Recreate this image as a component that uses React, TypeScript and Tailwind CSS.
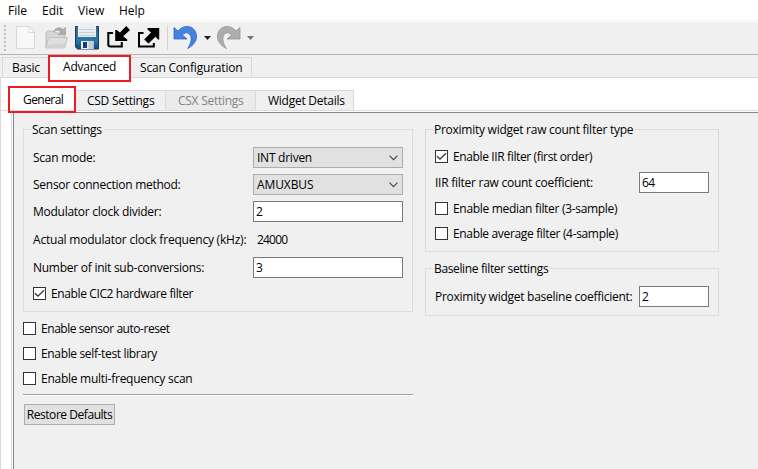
import type { ReactNode } from 'react';

function Check({ label, checked = false, className = '' }: { label: string; checked?: boolean; className?: string }) {
  return (
    <div className={`flex h-[13px] items-center ${className}`}>
      <span className="mr-[5px] block size-[13px] shrink-0 border border-[#333] bg-white">
        {checked && (
          <svg viewBox="0 0 11 11" className="block size-[11px]" fill="none" stroke="#333" strokeWidth="1.3">
            <path d="M1 5.2 L4 8.2 L10 2.2" />
          </svg>
        )}
      </span>
      <span>{label}</span>
    </div>
  );
}

function Combo({ value, className = '' }: { value: string; className?: string }) {
  return (
    <div className="flex h-[21px] w-[150px] shrink-0 items-center justify-between border border-[#adadad] bg-[#e1e1e1] pr-1 pl-[3px]">
      <span className={className}>{value}</span>
      <svg width="9" height="6" viewBox="0 0 9 6" fill="none" stroke="#444" strokeWidth="1.1">
        <path d="M0.5 0.7 L4.5 4.7 L8.5 0.7" />
      </svg>
    </div>
  );
}

function Field({ value, width = 'w-[150px]' }: { value: string; width?: string }) {
  return (
    <div className={`flex h-[21px] shrink-0 items-center border border-[#7a7a7a] bg-white pl-[2px] tracking-[-0.7px] ${width}`}>{value}</div>
  );
}

function Row({ label, children, className = '' }: { label: string; children: ReactNode; className?: string }) {
  return (
    <div className={`flex h-[21px] items-center justify-between ${className}`}>
      <span>{label}</span>
      {children}
    </div>
  );
}

function Group({ title, children, className = '' }: { title: string; children: ReactNode; className?: string }) {
  return (
    <section className={`border border-[#dcdcdc] pr-[9px] pl-[9px] ${className}`}>
      <h2 className="-mt-2 -ml-[2px] h-4 w-fit bg-[#f0f0f0] pr-[2px] pl-px leading-4">{title}</h2>
      {children}
    </section>
  );
}

function DropArrow({ className }: { className: string }) {
  return (
    <svg width="7" height="4" viewBox="0 0 7 4" className={className}>
      <path d="M0 0H7L3.5 4Z" fill="currentColor" />
    </svg>
  );
}

function Toolbar() {
  return (
    <div className="flex h-[33px] items-start border-b border-[#b4b4b4] bg-[#f0f0f0] pt-[3px]">
      <svg width="4" height="27" viewBox="0 0 4 27" className="ml-[4px] shrink-0" fill="#c0c0c0">
        {[0, 4, 8, 12, 16, 20, 24].map((y) => (
          <rect key={y} x="0" y={y} width="2" height="2" />
        ))}
      </svg>
      <svg width="20" height="25" viewBox="0 0 20 25" className="ml-[8px] shrink-0">
        <path d="M0.5 1.5H13L18.5 7.5V23.5H0.5Z" fill="#f8f8f8" stroke="#d9d9d9" />
        <path d="M13 1.5V7.5H18.5Z" fill="#fff" stroke="#d9d9d9" />
      </svg>
      <svg width="24" height="25" viewBox="0 0 24 25" className="ml-[9px] shrink-0">
        <path d="M1 23V8L2.5 6H8L10 8H20V12" fill="#d6d6d6" stroke="#bcbcbc" />
        <path d="M3.5 12.5H22.5L19.5 23H1Z" fill="#dedede" stroke="#c2c2c2" />
        <path d="M1.5 20 L20 18 L19 22.5H1.5Z" fill="#d3d3d3" />
        <path d="M8.5 7C10 2.5 15 1.5 18 4.5L20.5 2.5V9.5H13.5L16 7C14 4.8 11 5 8.5 7Z" fill="#adadad" stroke="#999" strokeWidth=".6" />
      </svg>
      <svg width="25" height="25" viewBox="0 0 25 25" className="ml-[6px] shrink-0">
        <defs>
          <linearGradient id="disk" x2="0" y2="1">
            <stop stopColor="#356b93" />
            <stop offset=".65" stopColor="#2676a7" />
            <stop offset="1" stopColor="#174870" />
          </linearGradient>
        </defs>
        <path d="M.5 1.5H23.5V24H2.5L.5 22Z" fill="url(#disk)" stroke="#173d61" />
        <rect x="3" y="1" width="18" height="11" fill="#e9eef1" />
        <path d="M4 4.5H20M4 7.5H20M4 10.5H20" stroke="#c7d0d6" />
        <rect x="6" y="16" width="12.5" height="8" fill="#e8edf0" />
        <rect x="13.5" y="16" width="5" height="8" fill="#c4ced7" />
        <rect x="8" y="17" width="4" height="6" fill="#173f75" />
      </svg>
      <svg width="24" height="25" viewBox="0 0 24 25" className="ml-[7px] shrink-0">
        <path d="M6 8H1.3V19.5Q1.3 21.5 3.5 21.5H14.8V17" fill="none" stroke="#000" strokeWidth="2" />
        <path d="M19.2 1L23 5L16.2 11.2L20.2 14.5V16H8.2V5H9.6L13 7.5Z" fill="#000" />
      </svg>
      <svg width="24" height="25" viewBox="0 0 24 25" className="ml-[7px] shrink-0">
        <path d="M5.5 8H1V21.5H15.8V18" fill="none" stroke="#000" strokeWidth="2" />
        <path d="M9.5 3H21.2V14.5H20L17.5 11.8L10.5 18.5L6.2 14.5L13 7.5L9.5 4.5Z" fill="#000" />
      </svg>
      <div className="ml-[5px] h-[25px] w-px shrink-0 bg-[#d2d2d2]" />
      <svg width="26" height="25" viewBox="0 0 26 25" className="ml-[5px] shrink-0">
        <path d="M1 2.5L5 6C9.5 .5 17 -.2 21 4.5C26 10.5 23.5 19.5 14.5 23.5C18.5 18.5 20 10 14.8 8C12.5 7.3 11 8.5 9.5 10L14 14H1Z" fill="#4581e0" stroke="#2f68c8" strokeWidth=".8" />
      </svg>
      <DropArrow className="mt-[11px] ml-[5px] shrink-0 text-[#202020]" />
      <svg width="26" height="25" viewBox="0 0 26 25" className="ml-[5px] shrink-0">
        <path transform="matrix(-1 0 0 1 25 0)" d="M1 2.5L5 6C9.5 .5 17 -.2 21 4.5C26 10.5 23.5 19.5 14.5 23.5C18.5 18.5 20 10 14.8 8C12.5 7.3 11 8.5 9.5 10L14 14H1Z" fill="#adadad" stroke="#969696" strokeWidth=".8" />
      </svg>
      <DropArrow className="mt-[11px] ml-[5px] shrink-0 text-[#777]" />
    </div>
  );
}

export default function App() {
  return (
    <div className="flex h-[469px] w-[758px] flex-col overflow-hidden bg-[#f0f0f0] font-['Open_Sans','Noto_Sans',sans-serif] text-[12px] leading-4 tracking-[-0.26px] whitespace-nowrap text-black">
      <nav className="flex h-[21px] shrink-0 border-b border-[#f0f0f0] bg-white pt-[3px] pl-2 tracking-normal">
        <span className="w-[34px]">File</span>
        <span className="w-[36px]">Edit</span>
        <span className="w-[41px]">View</span>
        <span>Help</span>
      </nav>
      <div className="h-px shrink-0 bg-white" />
      <Toolbar />

      <div className="flex h-[23px] shrink-0 items-start border-b border-[#d9d9d9] pt-[2px] pl-[2px] tracking-[-0.2px]">
        <div className="h-[20px] w-[48px] border-t border-l border-[#d9d9d9] pt-[2px] pl-[9px]">Basic</div>
        <div className="relative h-[22px] w-[79px] bg-white pt-[2px] pl-[13px]">
          Advanced
          <span className="pointer-events-none absolute -inset-x-[2px] -top-[2px] -bottom-[3px] z-10 border-2 border-[#ed1c24]" />
        </div>
        <div className="h-[20px] w-[123px] border-t border-r border-[#d9d9d9] pt-[2px] pl-[11px]">Scan Configuration</div>
      </div>

      <div className="flex min-h-0 flex-1 flex-col border-l border-[#d9d9d9] bg-white pt-[10px]">
        <div className="flex h-[23px] shrink-0 items-start border-b border-[#dcdcdc] pl-[9px]">
          <div className="relative z-10 h-[22px] w-[64px] bg-white pt-[4px] pl-[13px] tracking-[-0.55px]">
            General
            <span className="pointer-events-none absolute -inset-x-[2px] -top-[2px] -bottom-[3px] border-2 border-[#ed1c24]" />
          </div>
          <div className="mt-[2px] flex h-[20px] bg-[#f0f0f0]">
            <div className="w-[91px] border-t border-[#d9d9d9] pt-[2px] pl-[13px]">CSD Settings</div>
            <div className="w-[90px] border-t border-l border-[#d9d9d9] bg-[#ebebeb] pt-[2px] pl-[12px] text-[#838383]">CSX Settings</div>
            <div className="w-[99px] border-x border-t border-[#d9d9d9] pt-[2px] pl-[12px]">Widget Details</div>
          </div>
        </div>
        <div className="ml-[10px] flex min-h-0 flex-1 border-l border-[#dcdcdc] pt-px pl-px">
          <main className="flex flex-1 items-start gap-3 border-t border-l border-[#828790] bg-[#f0f0f0] pt-[16px] pl-[9px]">
            <div className="flex w-[390px] flex-col">
              <Group title="Scan settings" className="h-[183px]">
                <Row label="Scan mode:" className="mt-[9px]"><Combo value="INT driven" className="tracking-[-0.25px]" /></Row>
                <Row label="Sensor connection method:" className="mt-[6px]"><Combo value="AMUXBUS" className="tracking-[-0.1px]" /></Row>
                <Row label="Modulator clock divider:" className="mt-[6px]"><Field value="2" /></Row>
                <Row label="Actual modulator clock frequency (kHz):" className="mt-[7px] tracking-[-0.21px]">
                  <span className="w-[146px] tracking-[-0.8px]">24000</span>
                </Row>
                <Row label="Number of init sub-conversions:" className="mt-[7px]"><Field value="3" /></Row>
                <Check label="Enable CIC2 hardware filter" checked className="mt-[9px] tracking-[-0.38px]" />
              </Group>
              <Check label="Enable sensor auto-reset" className="mt-[10px] tracking-[-0.45px]" />
              <Check label="Enable self-test library" className="mt-[12px] tracking-[-0.35px]" />
              <Check label="Enable multi-frequency scan" className="mt-[12px]" />
              <div className="mt-[9px] h-[2px] border-t border-[#a0a0a0] bg-white" />
              <button className="mt-[8px] ml-px flex h-[21px] w-[91px] items-center justify-center border border-[#adadad] bg-[#e1e1e1] tracking-[-0.45px]">Restore Defaults</button>
            </div>
            <div className="flex w-[294px] flex-col">
              <Group title="Proximity widget raw count filter type" className="h-[123px]">
                <Check label="Enable IIR filter (first order)" checked className="mt-[12px] tracking-[-0.37px]" />
                <Row label="IIR filter raw count coefficient:" className="mt-[9px]"><Field value="64" width="w-[70px]" /></Row>
                <Check label="Enable median filter (3-sample)" className="mt-[9px] tracking-[-0.31px]" />
                <Check label="Enable average filter (4-sample)" className="mt-[12px] tracking-[-0.34px]" />
              </Group>
              <Group title="Baseline filter settings" className="mt-[16px] h-[48px] tracking-[-0.36px]">
                <Row label="Proximity widget baseline coefficient:" className="mt-[9px] tracking-[-0.26px]"><Field value="2" width="w-[70px]" /></Row>
              </Group>
            </div>
          </main>
        </div>
      </div>
    </div>
  );
}
